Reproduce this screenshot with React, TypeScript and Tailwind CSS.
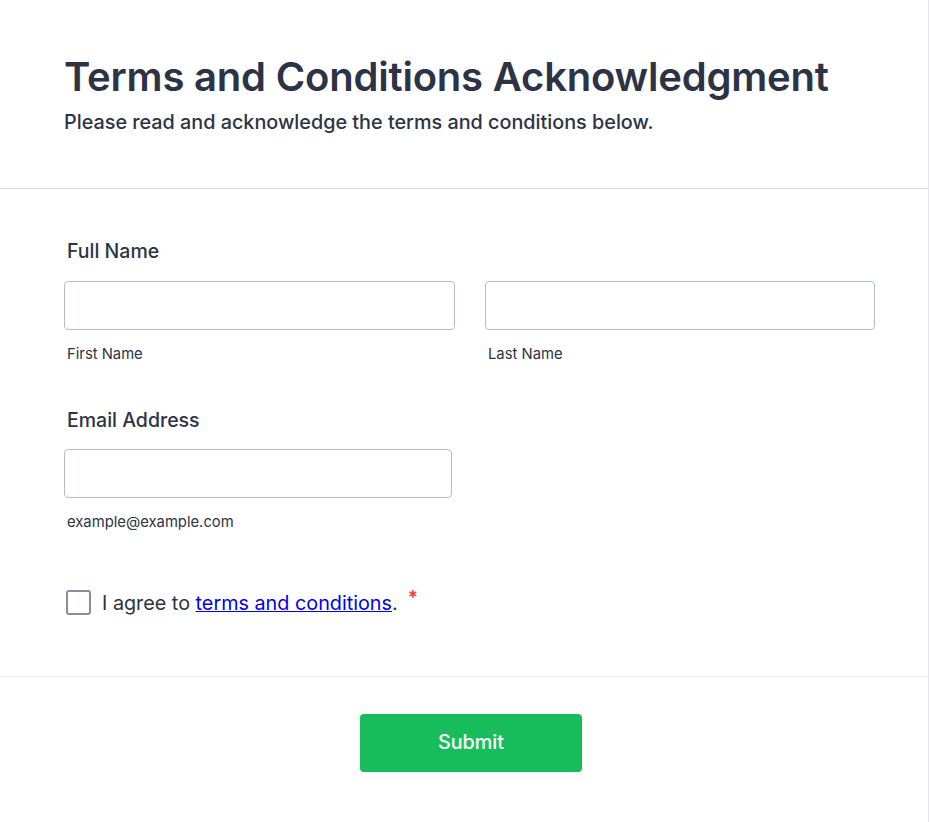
import { useState } from 'react';

function Field({ label, sub, widthClass }: { label?: string; sub: string; widthClass: string }) {
  return (
    <div className={`${widthClass} shrink-0`}>
      <input
        type="text"
        aria-label={label ?? sub}
        className="block h-[49px] w-full rounded-[4px] border border-[#b8bdc9] bg-white px-3 text-[16px] text-[#2c3345] outline-none"
      />
      <label className="mt-[15px] block pl-[3px] text-[14.8px] leading-[18px] text-[#2c3345]">{sub}</label>
    </div>
  );
}

export default function App() {
  const [agreed, setAgreed] = useState(false);

  return (
    <div className="min-h-[822px] w-[930px] bg-white font-['Inter','Noto_Sans',sans-serif] text-[#2c3345]">
      <div className="w-[929px] border-r border-[#e6e6ee]">
        {/* Header */}
        <div className="pl-[64px] pr-[54px] pb-[53px] pt-[53px]">
          <h1 className="text-[40px] font-semibold leading-[48px] tracking-[-0.2px]">
            Terms and Conditions Acknowledgment
          </h1>
          <p className="mt-[8px] text-[19.8px] font-medium leading-[26px]">
            Please read and acknowledge the terms and conditions below.
          </p>
        </div>

        <div className="border-t border-[#d8dae9]" />

        {/* Fields */}
        <div className="pl-[64px] pr-[54px] pb-[61px] pt-[50px]">
          <div className="pl-[3px] text-[19.5px] font-medium leading-[24px]">Full Name</div>
          <div className="mt-[18px] flex gap-[30px]">
            <Field sub="First Name" widthClass="w-[391px]" />
            <Field sub="Last Name" widthClass="w-[390px]" />
          </div>

          <div className="mt-[45px] pl-[3px] text-[19.5px] font-medium leading-[24px]">Email Address</div>
          <div className="mt-[17px]">
            <Field sub="example@example.com" widthClass="w-[388px]" label="Email Address" />
          </div>

          <div className="mt-[59px] flex items-center pl-[2px]">
            <button
              type="button"
              role="checkbox"
              aria-checked={agreed}
              onClick={() => setAgreed(!agreed)}
              className="h-[25px] w-[25px] shrink-0 rounded-[3px] border-2 border-[#8a8e9c] bg-white"
            />
            <span className="ml-[11px] text-[19.8px] leading-[24px] text-[#2c3345]">
              I agree to{' '}
              <a href="#" className="text-[#0000ee] underline">
                terms and conditions
              </a>
              .
            </span>
            <span className="ml-[10px] -mt-[9px] text-[19px] font-semibold leading-[24px] text-[#f23a3c]">*</span>
          </div>
        </div>

        <div className="border-t border-[#e8e8f2]" />

        {/* Footer */}
        <div className="flex justify-center pb-[50px] pl-[14px] pt-[37px]">
          <button
            type="button"
            className="h-[58px] w-[222px] rounded-[4px] bg-[#18bd5b] text-[19.8px] font-medium text-white"
          >
            Submit
          </button>
        </div>
      </div>
    </div>
  );
}
